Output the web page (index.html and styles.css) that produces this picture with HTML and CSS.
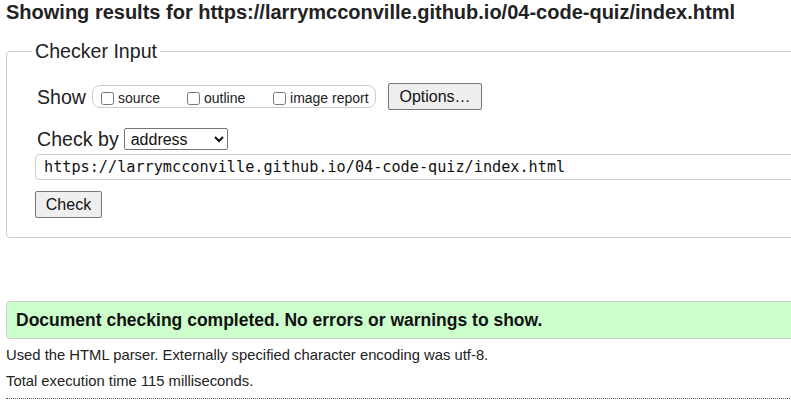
FILE: index.html
```html
<!DOCTYPE html>
<html lang="en">
<head>
<meta charset="utf-8">
<title>Nu Html Checker</title>
<link rel="stylesheet" href="styles.css">
</head>
<body>
<div class="page">
  <h2 class="results">Showing results for https://larrymcconville.github.io/04-code-quiz/index.html</h2>
  <fieldset class="checker">
    <legend>Checker Input</legend>
    <div class="row show-row">
      <span class="row-label">Show</span>
      <span class="show-opts">
        <label class="opt"><input type="checkbox">source</label>
        <label class="opt"><input type="checkbox">outline</label>
        <label class="opt"><input type="checkbox">image report</label>
      </span>
      <button class="btn options-btn" type="button">Options…</button>
    </div>
    <div class="row checkby-row">
      <span class="row-label">Check by</span>
      <select class="checkby"><option>address</option><option>file upload</option><option>text input</option></select>
    </div>
    <div class="url-box">https://larrymcconville.github.io/04-code-quiz/index.html</div>
    <button class="btn check-btn" type="button">Check</button>
  </fieldset>
  <div class="success">Document checking completed. No errors or warnings to show.</div>
  <p class="details">Used the HTML parser. Externally specified character encoding was utf-8.</p>
  <p class="details">Total execution time 115 milliseconds.</p>
  <hr class="dotted">
</div>
</body>
</html>
```
FILE: styles.css
```css
html, body {
  margin: 0;
  padding: 0;
  background: #fff;
  overflow: hidden;
}
body {
  font-family: "Liberation Sans", Arial, sans-serif;
  color: #222;
}
.page {
  width: 1000px;
  padding: 0 6px;
}
.results {
  font-size: 20px;
  font-weight: bold;
  line-height: 22px;
  margin: 1px 0 0;
}
.checker {
  margin: 17px 0 0;
  border: 1px solid #ccc;
  border-radius: 4px;
  padding: 0 10px 19px 29px;
}
.checker legend {
  font-size: 19.6px;
  line-height: 22px;
  padding: 0 3px;
  margin-left: -4px;
}
.row {
  display: flex;
  align-items: center;
}
.show-row {
  margin-top: 21px;
  height: 27px;
}
.row-label {
  font-size: 19.6px;
  line-height: 22px;
  margin-left: 1px;
}
.show-opts {
  display: flex;
  align-items: center;
  margin-left: 6px;
  height: 21px;
  border: 1px solid #ccc;
  border-radius: 8px;
  padding: 0 6px 0 4px;
  width: 272px;
}
.opt {
  font-size: 14px;
  display: flex;
  align-items: flex-end;
  width: 86px;
  line-height: 16px;
  padding-top: 2px;
}
.opt:last-child {
  width: auto;
}
.opt input {
  margin: 0 4px 1px 4px;
  width: 13px;
  height: 13px;
}
.btn {
  font-family: "Liberation Sans", Arial, sans-serif;
  font-size: 16px;
  line-height: 19px;
  color: #111;
  background: #efefef;
  border: 1px solid #767676;
  border-radius: 2px;
  padding: 3px 10px;
}
.options-btn {
  margin-left: 12px;
  width: 94px;
}
.checkby-row {
  margin-top: 18px;
  height: 22px;
}
.checkby {
  margin-left: 5px;
  width: 104px;
  height: 22px;
  font-family: "Liberation Sans", Arial, sans-serif;
  font-size: 16px;
  color: #111;
  border: 1px solid #767676;
  border-radius: 2px;
  background: #fff;
  padding: 0 2px;
}
.url-box {
  margin-top: 4px;
  height: 24px;
  border: 1px solid #ccc;
  border-radius: 4px;
  padding: 0 8px;
  font-family: "DejaVu Sans Mono", "Liberation Mono", monospace;
  font-size: 15.2px;
  line-height: 24px;
  color: #111;
  margin-left: -1px;
}
.check-btn {
  display: block;
  margin-top: 11px;
  margin-left: -1px;
  width: 67px;
  height: 27px;
  padding: 3px 0;
}
.success {
  margin-top: 63px;
  background: #ccffcc;
  border: 1px solid #ccc;
  border-radius: 4px;
  font-size: 17.5px;
  font-weight: bold;
  line-height: 36px;
  padding: 0 9px;
  color: #111;
}
.details {
  font-size: 14.8px;
  line-height: 17px;
  margin: 8px 0 0;
}
.details + .details {
  margin-top: 9px;
}
.dotted {
  margin: 8px 0 0;
  border: 0;
  border-top: 1px dotted #555;
  height: 0;
}
```
